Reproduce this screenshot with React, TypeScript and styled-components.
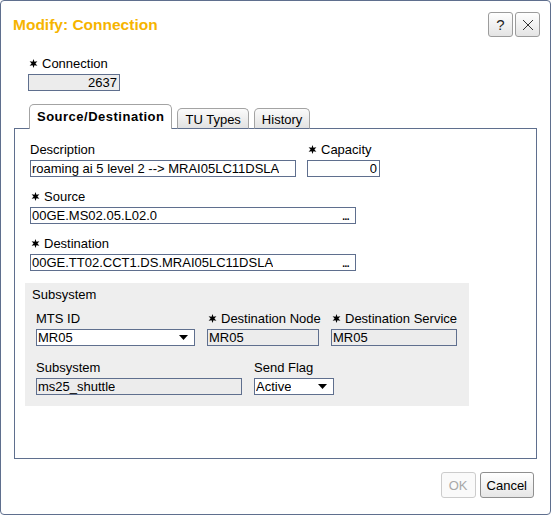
import styled, { createGlobalStyle } from "styled-components"

const GlobalStyle = createGlobalStyle`
    html, body {
    margin: 0;
    padding: 0;
    background: #ffffff;
    }

    body {
    font-family: "Liberation Sans", Arial, sans-serif;
    font-size: 13px;
    color: #000000;
    }
`

// required-field marker (six pointed star)
const Star = () => (
    <StarMark width="9" height="9" viewBox="0 0 9 9">
        <path
            d="M4.5 0 L5.45 2.85 L8.4 2.25 L6.4 4.5 L8.4 6.75 L5.45 6.15 L4.5 9 L3.55 6.15 L0.6 6.75 L2.6 4.5 L0.6 2.25 L3.55 2.85 Z"
            fill="#000"
        />
    </StarMark>
)

type FieldProps = {
    label: string
    required?: boolean
    width: number
    value: string
    kind?: "text" | "readonly" | "select" | "picker"
    align?: "left" | "right"
}

const Field = ({ label, required, width, value, kind = "text", align = "left" }: FieldProps) => {
    return (
        <FieldBox $width={width}>
            <Label>
                {required && <Star />}
                {label}
            </Label>
            <Input $readonly={kind === "readonly"} $align={align}>
                <InputText>{value}</InputText>
                {kind === "picker" && <Dots>...</Dots>}
                {kind === "select" && (
                    <svg width="9" height="5" viewBox="0 0 9 5">
                        <path d="M0 0 L9 0 L4.5 5 Z" fill="#000" />
                    </svg>
                )}
            </Input>
        </FieldBox>
    )
}

const App = () => {
    return (
        <>
            <GlobalStyle />
            <Dialog>
                <Header>
                    <Title>Modify: Connection</Title>
                    <HeaderButtons>
                        <IconButton>?</IconButton>
                        <IconButton>
                            <svg width="12" height="12" viewBox="0 0 12 12">
                                <path d="M1 1 L11 11 M11 1 L1 11" stroke="#333" strokeWidth="1" fill="none" />
                            </svg>
                        </IconButton>
                    </HeaderButtons>
                </Header>

                <TopField>
                    <Field label="Connection" required width={92} value="2637" kind="readonly" align="right" />
                </TopField>

                <TabStrip>
                    <Tab $active>Source/Destination</Tab>
                    <Tab>TU Types</Tab>
                    <Tab>History</Tab>
                </TabStrip>

                <Panel>
                    <Row>
                        <Field label="Description" width={266} value="roaming ai 5 level 2 --> MRAI05LC11DSLA" />
                        <Field label="Capacity" required width={73} value="0" align="right" />
                    </Row>
                    <Row>
                        <Field label="Source" required width={326} value="00GE.MS02.05.L02.0" kind="picker" />
                    </Row>
                    <Row>
                        <Field label="Destination" required width={326} value="00GE.TT02.CCT1.DS.MRAI05LC11DSLA" kind="picker" />
                    </Row>

                    <Group>
                        <GroupTitle>Subsystem</GroupTitle>
                        <GroupRow>
                            <Field label="MTS ID" width={159} value="MR05" kind="select" />
                            <Field label="Destination Node" required width={112} value="MR05" kind="readonly" />
                            <Field label="Destination Service" required width={126} value="MR05" kind="readonly" />
                        </GroupRow>
                        <GroupRow>
                            <Field label="Subsystem" width={206} value="ms25_shuttle" kind="readonly" />
                            <Field label="Send Flag" width={80} value="Active" kind="select" />
                        </GroupRow>
                    </Group>
                </Panel>

                <Footer>
                    <Button disabled>OK</Button>
                    <Button>Cancel</Button>
                </Footer>
            </Dialog>
        </>
    )
}

const Dialog = styled.div`
    width: 551px;
    height: 515px;
    box-sizing: border-box;
    border: 1px solid #5f6f8e;
    border-radius: 4px;
    display: flex;
    flex-direction: column;
    background: #ffffff;
`

const Header = styled.div`
    display: flex;
    align-items: center;
    justify-content: space-between;
    margin-top: 11px;
    padding: 0 10px 0 12px;
    height: 25px;
`

const Title = styled.h1`
    margin: 0;
    font-size: 15.5px;
    font-weight: bold;
    color: #f6b400;
`

const HeaderButtons = styled.div`
    display: flex;
    gap: 2px;
`

const IconButton = styled.button`
    width: 25px;
    height: 25px;
    box-sizing: border-box;
    padding: 0;
    display: flex;
    align-items: center;
    justify-content: center;
    border: 1px solid #9c9c9c;
    border-radius: 3px;
    background: linear-gradient(#ffffff, #e4e4e4);
    font-family: "Liberation Sans", Arial, sans-serif;
    font-size: 15px;
    color: #222222;
`

const TopField = styled.div`
    margin-top: 19px;
    padding-left: 27px;
`

const FieldBox = styled.div<{ $width: number }>`
    display: flex;
    flex-direction: column;
    width: ${(p) => p.$width}px;
`

const Label = styled.div`
    display: flex;
    align-items: center;
    height: 15px;
    line-height: 15px;
    margin-bottom: 3px;
    white-space: nowrap;
`

const StarMark = styled.svg`
    flex: 0 0 auto;
    margin: -1px 4px 0 1px;
`

const Input = styled.div<{ $readonly?: boolean; $align: "left" | "right" }>`
    display: flex;
    align-items: center;
    justify-content: ${(p) => (p.$align === "right" ? "flex-end" : "space-between")};
    height: 17px;
    box-sizing: border-box;
    border: 1px solid #5f6f8e;
    background: ${(p) => (p.$readonly ? "#ececec" : "#ffffff")};
    padding: 0 6px 0 1px;
    line-height: 15px;
    white-space: nowrap;

    ${(p) => p.$align === "right" && "padding-right: 2px;"}
`

const InputText = styled.span`
    overflow: hidden;
`

const Dots = styled.span`
    font-weight: bold;
    font-size: 10px;
    letter-spacing: -0.5px;
    margin-top: 2px;
`

const TabStrip = styled.div`
    display: flex;
    align-items: flex-end;
    gap: 5px;
    margin: 13px 13px 0;
    padding-left: 15px;
    height: 24px;
    position: relative;
    z-index: 1;
`

const Tab = styled.div<{ $active?: boolean }>`
    box-sizing: border-box;
    height: ${(p) => (p.$active ? "25px" : "21px")};
    margin-bottom: -1px;
    padding: ${(p) => (p.$active ? "4px 7px 0 7px" : "3px 7px 0 7px")};
    border: 1px solid #a3a3a3;
    border-bottom: ${(p) => (p.$active ? "none" : "1px solid #5f6f8e")};
    border-radius: 5px 5px 0 0;
    background: ${(p) => (p.$active ? "#ffffff" : "linear-gradient(#fbfbfb, #e2e2e2)")};
    font-weight: ${(p) => (p.$active ? "bold" : "normal")};
    letter-spacing: ${(p) => (p.$active ? "0.5px" : "0")};
    line-height: 15px;
    white-space: nowrap;
`

const Panel = styled.div`
    flex: 1;
    margin: 0 13px;
    border: 1px solid #5f6f8e;
    padding: 13px 10px 0;
    display: flex;
    flex-direction: column;
    align-items: flex-start;
    gap: 12px;
`

const Row = styled.div`
    display: flex;
    gap: 11px;
    padding-left: 5px;
`

const Group = styled.div`
    width: 444px;
    box-sizing: border-box;
    background: #eeeeee;
    padding: 4px 0 11px 11px;
    display: flex;
    flex-direction: column;
    gap: 14px;
`

const GroupTitle = styled.div`
    margin-left: -4px;
    margin-bottom: -5px;
    line-height: 15px;
`

const GroupRow = styled.div`
    display: flex;
    gap: 12px;
`

const Footer = styled.div`
    display: flex;
    justify-content: flex-end;
    gap: 4px;
    margin-top: 13px;
    padding: 0 16px 16px 0;
`

const Button = styled.button`
    height: 26px;
    box-sizing: border-box;
    padding: 0 6px;
    min-width: 35px;
    border: 1px solid #8f8f8f;
    border-radius: 3px;
    background: linear-gradient(#ffffff, #e6e6e6);
    font-family: "Liberation Sans", Arial, sans-serif;
    font-size: 13px;
    color: #000000;

    &:disabled {
    border-color: #cccccc;
    color: #a8a8a8;
    background: #fafafa;
    }
`

export default App
